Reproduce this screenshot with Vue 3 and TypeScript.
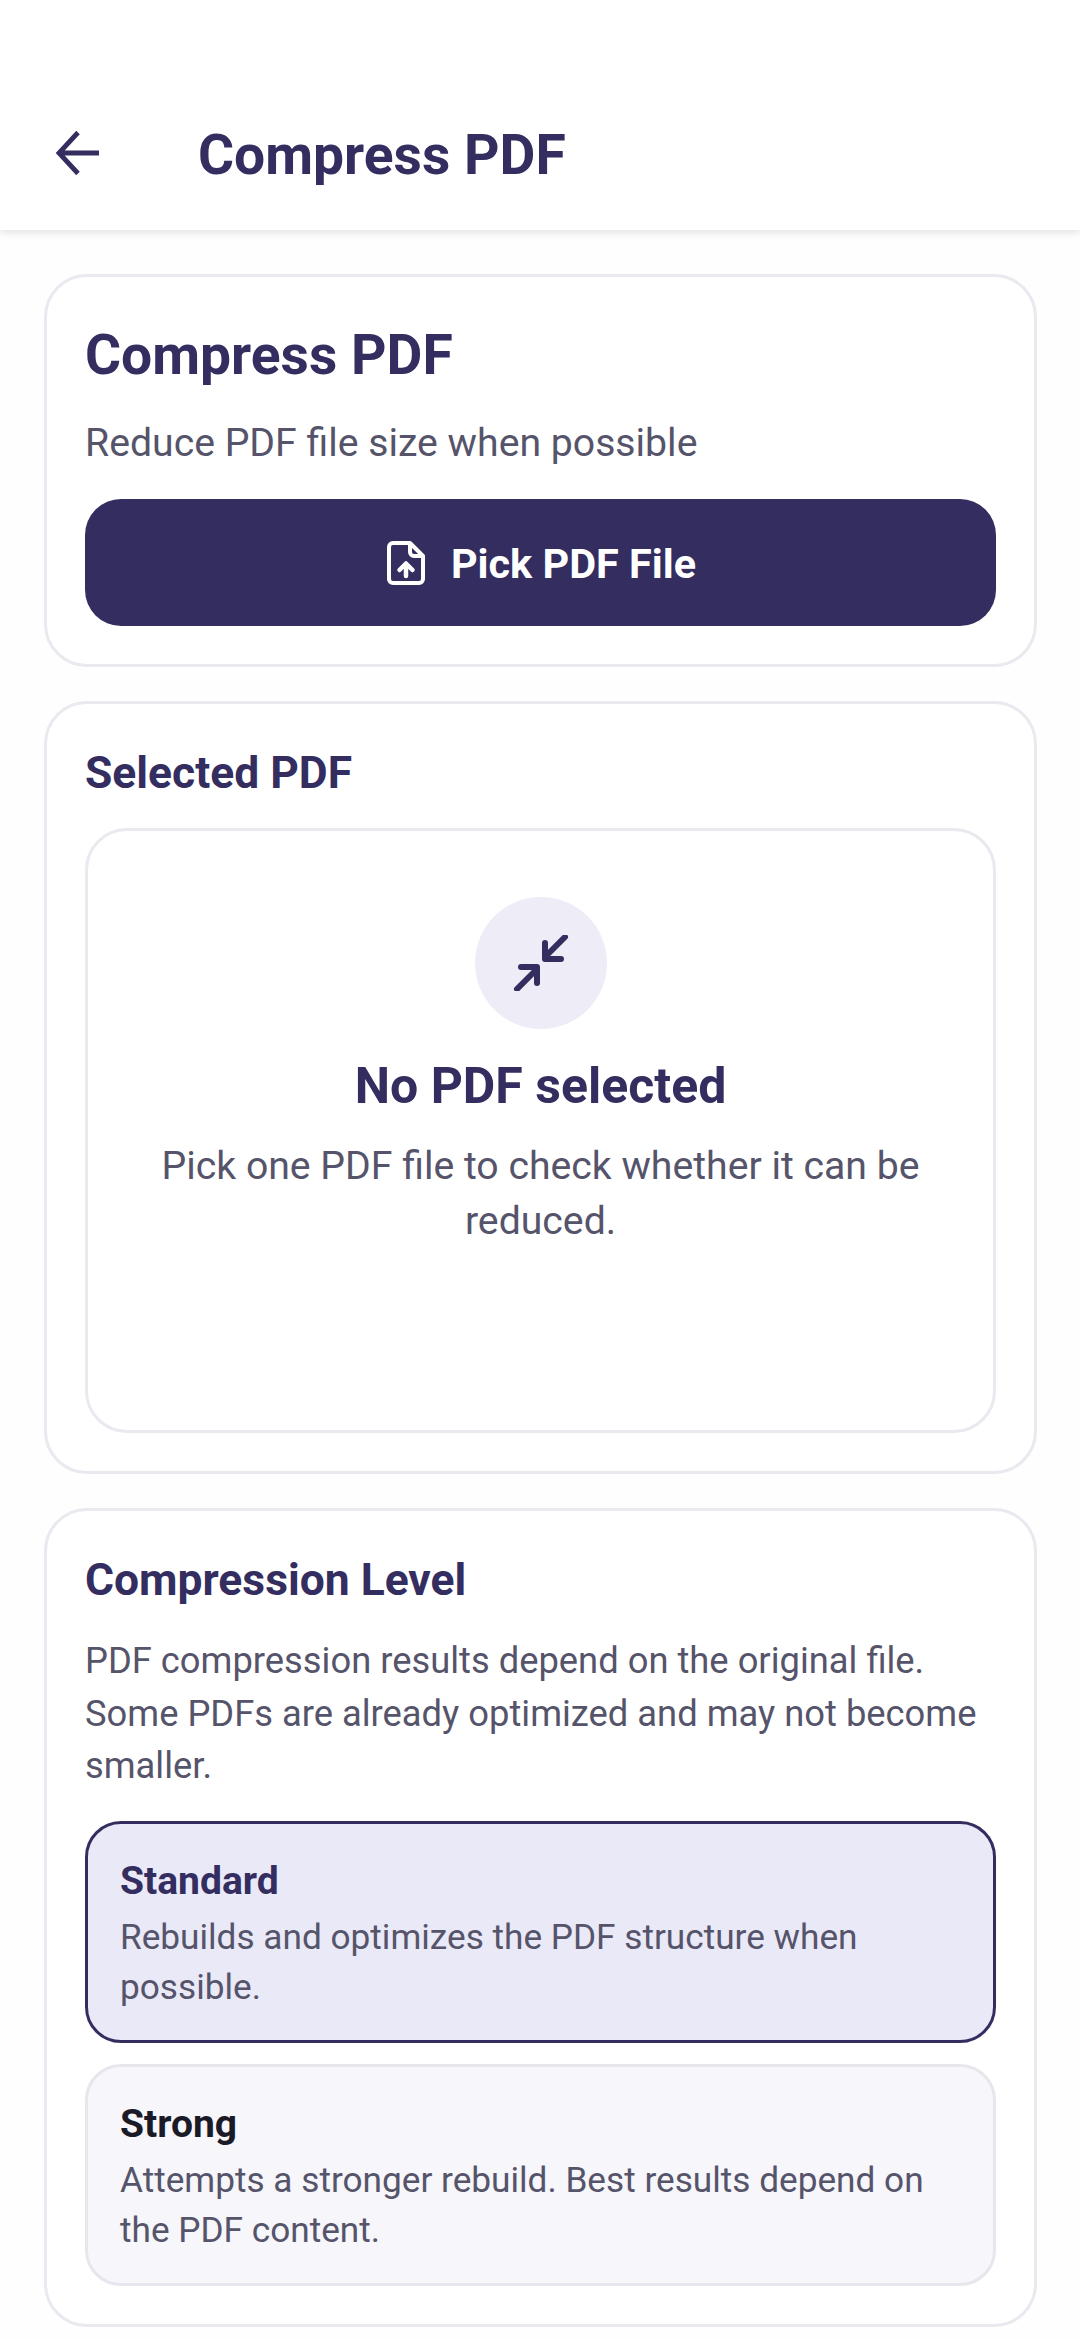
<script setup lang="ts">
const levels = [
  { name: 'Standard', text: 'Rebuilds and optimizes the PDF structure when possible.', on: true },
  { name: 'Strong', text: 'Attempts a stronger rebuild. Best results depend on the PDF content.', on: false },
]
</script>

<template>
  <div class="page">
    <header class="topbar">
      <svg class="back" viewBox="0 0 48 48" fill="none" stroke="#332e5f" stroke-width="4.8">
        <path d="M46 24H7M25 3.5L6 24L25 44.5" />
      </svg>
      <h1>Compress PDF</h1>
    </header>

    <main class="content">
      <section class="card">
        <h2 class="big">Compress PDF</h2>
        <p class="sub">Reduce PDF file size when possible</p>
        <button class="pick">
          <svg viewBox="0 0 38 44" width="38" height="44" fill="none" stroke="#fff" stroke-width="4" stroke-linejoin="round" stroke-linecap="round">
            <path d="M22 2H6a4 4 0 0 0-4 4v32a4 4 0 0 0 4 4h26a4 4 0 0 0 4-4V15L23 2z" />
            <path d="M23 3v8a4 4 0 0 0 4 4h8" />
            <path d="M19 35V24M12.5 29l6.5-6.5 6.5 6.5" stroke-width="4.5" />
          </svg>
          <span>Pick PDF File</span>
        </button>
      </section>

      <section class="card">
        <h3>Selected PDF</h3>
        <div class="empty">
          <div class="circle">
            <svg viewBox="0 0 56 56" width="56" height="56" fill="none" stroke="#332e5f" stroke-width="6" stroke-linecap="round" stroke-linejoin="round">
              <path d="M52 2L33 21M32 8v16h16" />
              <path d="M4 54l19-19M8 32h16v16" />
            </svg>
          </div>
          <div class="empty-title">No PDF selected</div>
          <p class="empty-text">Pick one PDF file to check whether it can be reduced.</p>
        </div>
      </section>

      <section class="card last">
        <h3>Compression Level</h3>
        <p class="note">PDF compression results depend on the original file. Some PDFs are already optimized and may not become smaller.</p>
        <div class="levels">
          <div v-for="l in levels" :key="l.name" class="level" :class="{ on: l.on }">
            <div class="level-name">{{ l.name }}</div>
            <div class="level-text">{{ l.text }}</div>
          </div>
        </div>
      </section>
    </main>
  </div>
</template>

<style>
html, body {
  margin: 0;
  background: #fff;
}
</style>

<style scoped>
.page {
  width: 1080px;
  height: 2340px;
  overflow: hidden;
  background: #fefefe;
  font-family: Roboto, sans-serif;
}
.topbar {
  height: 230px;
  box-sizing: border-box;
  padding: 75px 0 0 53px;
  display: flex;
  align-items: center;
  background: #fff;
  box-shadow: 0 2px 8px rgba(30, 30, 60, 0.14);
}
.back {
  width: 48px;
  height: 48px;
}
h1 {
  margin: 5px 0 0 97px;
  font-size: 55.2px;
  font-weight: 700;
  color: #332e5f;
}
.content {
  padding: 44px 43px 0 44px;
  display: flex;
  flex-direction: column;
  gap: 34px;
}
.card {
  border: 3px solid #e9e9f0;
  border-radius: 43px;
  padding: 37px 38px 38px;
  background: #fff;
}
.big {
  margin: 9px 0 0;
  font-size: 55.2px;
  line-height: 64px;
  font-weight: 700;
  color: #332e5f;
}
.sub {
  margin: 32px 0 0;
  font-size: 39.2px;
  line-height: 48px;
  color: #55546a;
}
.pick {
  margin-top: 32px;
  width: 100%;
  height: 127px;
  border: 0;
  border-radius: 36px;
  background: #332e5f;
  display: flex;
  align-items: center;
  justify-content: center;
  gap: 26px;
  padding: 0 0 0 2px;
  color: #fff;
  font-family: Roboto, sans-serif;
  font-size: 41.4px;
  font-weight: 700;
}
.pick span {
  padding-top: 2px;
}
h3 {
  margin: 4px 0 0;
  font-size: 44.4px;
  line-height: 56px;
  font-weight: 700;
  color: #332e5f;
}
.empty {
  margin-top: 27px;
  height: 605px;
  box-sizing: border-box;
  border: 3px solid #e9e9f0;
  border-radius: 42px;
  padding: 66px 50px 0;
  display: flex;
  flex-direction: column;
  align-items: center;
  text-align: center;
}
.circle {
  width: 132px;
  height: 132px;
  border-radius: 50%;
  background: #eeedf7;
  display: flex;
  align-items: center;
  justify-content: center;
}
.empty-title {
  margin-top: 25px;
  font-size: 50px;
  line-height: 64px;
  font-weight: 700;
  color: #332e5f;
}
.empty-text {
  margin: 21px 0 0;
  font-size: 39.2px;
  line-height: 55px;
  color: #55546a;
}
.note {
  margin: 27px 0 0;
  font-size: 36.35px;
  line-height: 52.5px;
  color: #55546a;
}
.levels {
  margin-top: 28px;
  display: flex;
  flex-direction: column;
  gap: 21px;
}
.level {
  height: 222px;
  box-sizing: border-box;
  border: 3px solid #e6e6ec;
  border-radius: 36px;
  padding: 34px 32px 0;
  background: #f6f6fb;
}
.level.on {
  border-color: #332e5f;
  background: #eae9f7;
}
.level-name {
  font-size: 39px;
  line-height: 46px;
  font-weight: 700;
  color: #1b1b28;
}
.level.on .level-name {
  color: #332e5f;
}
.level-text {
  margin-top: 8px;
  font-size: 35.2px;
  line-height: 50px;
  color: #55546a;
}
</style>
